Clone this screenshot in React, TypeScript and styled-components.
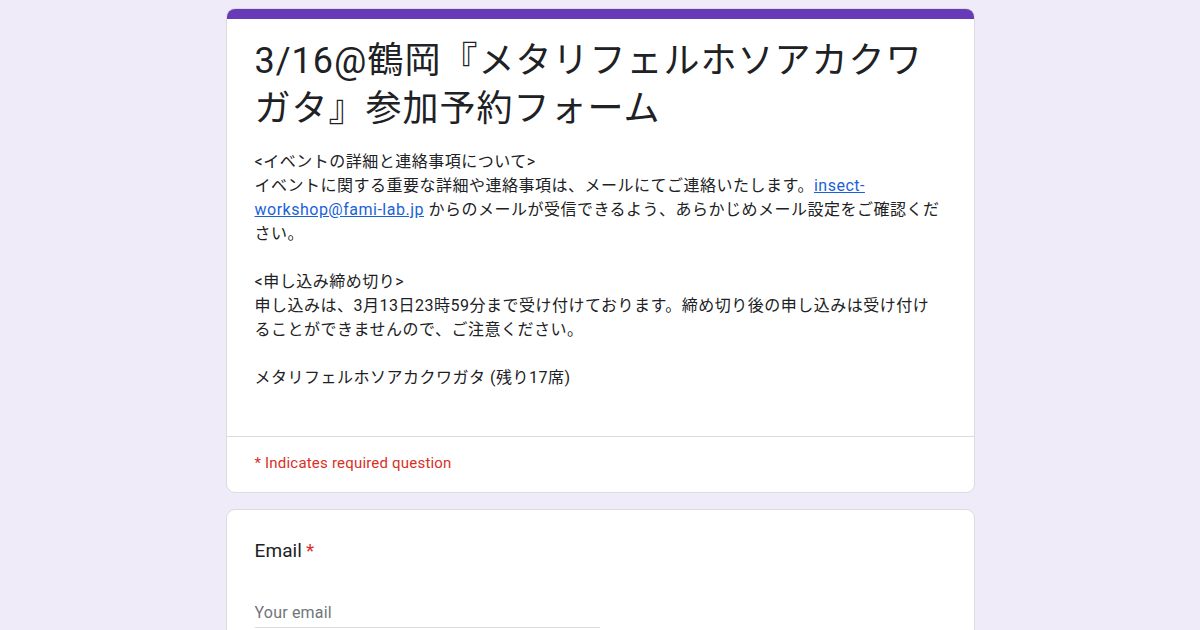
import React from 'react';
import styled, { createGlobalStyle } from 'styled-components';

const GlobalStyle = createGlobalStyle`
  html, body {
    margin: 0;
    padding: 0;
    background: #f0ebf8;
  }
  body {
    font-family: Roboto, "Noto Sans CJK JP", sans-serif;
    color: #202124;
  }
`;

const Page = styled.div`
  display: flex;
  flex-direction: column;
  align-items: center;
  gap: 16px;
  padding-top: 8px;
  height: 630px;
  box-sizing: border-box;
  overflow: hidden;
`;

const Card = styled.div`
  flex-shrink: 0;
  box-sizing: border-box;
  width: 749px;
  background: #fff;
  border: 1px solid #dadce0;
  border-radius: 9px;
  overflow: hidden;
`;

const TopBar = styled.div`
  height: 10px;
  background: #673ab7;
`;

const Header = styled.div`
  padding: 18px 28px 46px;
`;

const Title = styled.h1`
  margin: 0 0 17px;
  font-family: Roboto, "Noto Sans CJK JP", sans-serif;
  font-weight: 400;
  font-size: 36px;
  line-height: 48px;
  letter-spacing: 1px;
  color: #202124;
`;

const Description = styled.div`
  font-size: 16px;
  line-height: 24px;
  letter-spacing: 0.5px;
  white-space: nowrap;
  color: #202124;
`;

const Link = styled.a`
  color: #1a62d8;
  text-decoration: underline;
`;

const Gap = styled.div`
  height: 24px;
`;

const RequiredRow = styled.div`
  border-top: 1px solid #dadce0;
  padding: 14px 28px 17px;
  font-size: 15px;
  line-height: 24px;
  letter-spacing: 0.2px;
  color: #d93025;
`;

const Question = styled.div`
  padding: 28px 28px 0;
  height: 140px;
`;

const Label = styled.div`
  font-size: 19px;
  line-height: 26px;
  letter-spacing: 0.1px;
  color: #202124;
`;

const Star = styled.span`
  color: #d93025;
  margin-left: 4px;
`;

const Input = styled.div`
  margin-top: 37px;
  width: 345px;
  padding-bottom: 2px;
  border-bottom: 1px solid #dadce0;
  font-size: 16px;
  line-height: 24px;
  letter-spacing: 0.2px;
  color: #70757a;
`;

export default function App() {
  return (
    <>
      <GlobalStyle />
      <Page>
        <Card>
          <TopBar />
          <Header>
            <Title>
              3/16@鶴岡『メタリフェルホソアカクワ
              <br />
              ガタ』参加予約フォーム
            </Title>
            <Description>
              &lt;イベントの詳細と連絡事項について&gt;
              <br />
              イベントに関する重要な詳細や連絡事項は、メールにてご連絡いたします。<Link href="#">insect-</Link>
              <br />
              <Link href="#">workshop@fami-lab.jp</Link> からのメールが受信できるよう、あらかじめメール設定をご確認くだ
              <br />
              さい。
              <Gap />
              &lt;申し込み締め切り&gt;
              <br />
              申し込みは、3月13日23時59分まで受け付けております。締め切り後の申し込みは受け付け
              <br />
              ることができませんので、ご注意ください。
              <Gap />
              メタリフェルホソアカクワガタ (残り17席)
            </Description>
          </Header>
          <RequiredRow>* Indicates required question</RequiredRow>
        </Card>
        <Card>
          <Question>
            <Label>
              Email<Star>*</Star>
            </Label>
            <Input>Your email</Input>
          </Question>
        </Card>
      </Page>
    </>
  );
}
